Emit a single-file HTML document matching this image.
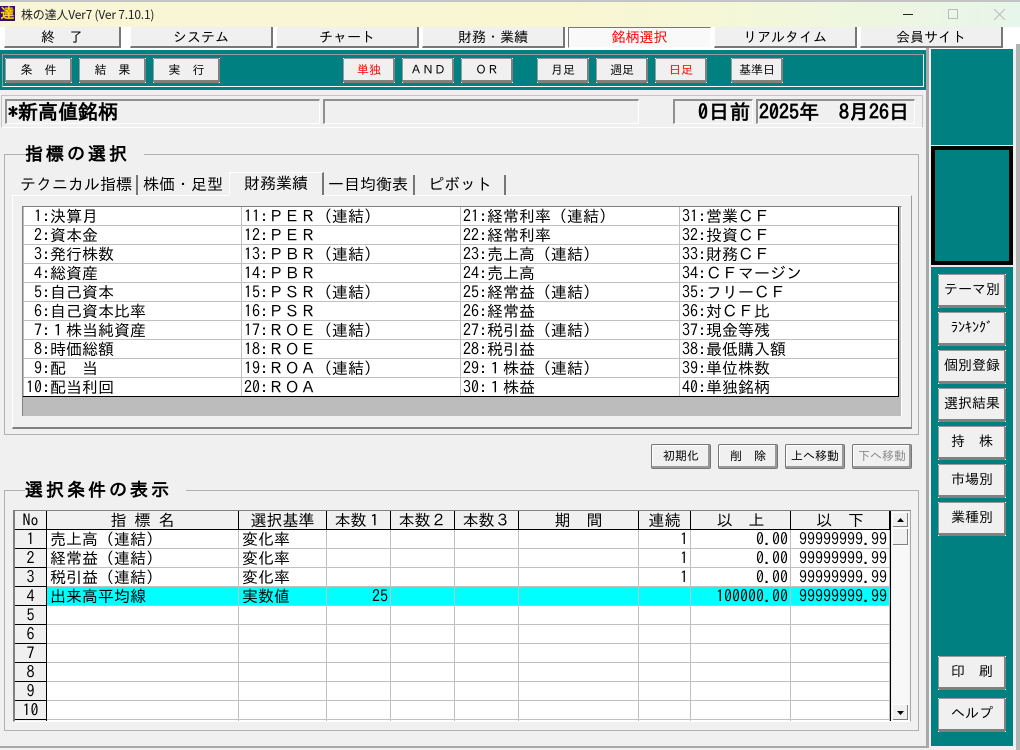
<!DOCTYPE html>
<html lang="ja"><head><meta charset="utf-8"><title>株の達人</title>
<style>
html,body{margin:0;padding:0}
body{width:1020px;height:750px;position:relative;overflow:hidden;background:#f0f0f0;font-family:"IPAGothic","Liberation Sans","Noto Sans CJK JP",sans-serif;color:#000}
.a{position:absolute;box-sizing:border-box}
.t{white-space:pre}
.tab{position:absolute;top:27px;height:21px;box-sizing:border-box;background:#f0f0f0;border-left:1px solid #fff;border-right:2px solid #777;border-bottom:2px solid #777;font-size:14px;line-height:20px;text-align:center;white-space:pre}
.tab.sel{background:#f9f9f9;border-left:1px solid #777;border-top:1px solid #777;border-right:1px solid #fff;border-bottom:1px solid #fff;color:#f00;line-height:19px}
.b{position:absolute;box-sizing:border-box;background:#f0f0f0;box-shadow:inset -2px -3px 0 #808080,inset 1px 1px 0 #999;text-align:center;white-space:pre;font-size:12px;color:#000}
.b::before{content:"";position:absolute;left:0;top:0;right:0;bottom:0;background:linear-gradient(#fff,#fff) 0 0/1px 1px no-repeat,linear-gradient(#fff,#fff) 100% 0/1px 1px no-repeat,linear-gradient(#fff,#fff) 0 100%/1px 1px no-repeat,linear-gradient(#fff,#fff) 100% 100%/1px 1px no-repeat}
.tb{top:58px;height:25px;line-height:24px}
.sb{left:938px;width:68px;height:34px;line-height:30px;font-size:14px}
.lb{top:444px;width:60px;height:25px;line-height:22px;border:1px solid #777;border-radius:2px;box-shadow:inset -2px -2px 0 #999,inset 1px 1px 0 #fff}
.lb::before{display:none}
.f{position:absolute;box-sizing:border-box;top:99px;height:25px;border-top:2px solid #909090;border-left:2px solid #909090;border-right:1px solid #fff;border-bottom:1px solid #fff;font-size:20px;line-height:23px;font-weight:bold;white-space:pre}
.g{position:absolute;box-sizing:border-box;left:4px;width:915px;border:1px solid #b0b0b0}
.leg{position:absolute;background:#f0f0f0;font-size:18px;font-weight:bold;letter-spacing:3px;line-height:20px;white-space:pre;padding-right:14px}
.tt{position:absolute;top:174px;font-size:16px;line-height:20px;white-space:pre}
.sep{position:absolute;top:175px;width:2px;height:20px;background:#777}
table{border-collapse:separate;border-spacing:0;table-layout:fixed;position:absolute}
td{box-sizing:border-box;height:19px;padding:0;white-space:pre;font-size:16px;line-height:18px;overflow:hidden;vertical-align:top}
.l td{border-right:1px solid #c0c0c0;border-bottom:1px solid #c0c0c0;padding-left:2px}
.l td:last-child{border-right:0}
.m td{border-right:1px solid #c0c0c0;border-bottom:1px solid #c0c0c0;padding:0 2px 0 3px}
.m td:first-child{background:#f0f0f0;border-right:1px solid #000;border-bottom:1px solid #000;text-align:center;padding:0}
.m tr.h td{background:#f0f0f0;border-right:1px solid #000;border-bottom:1px solid #000;text-align:center;padding:0}
.m tr.c td:not(:first-child){background:#0ff}
.m .n{text-align:right}
.arrow{position:absolute;box-sizing:border-box;left:892px;width:17px;background:#f0f0f0;border:1px solid #fff;box-shadow:inset -1px -1px 0 #808080}
</style></head>
<body>
<!-- title bar -->
<div class="a" style="left:0;top:0;width:1020px;height:27px;background:linear-gradient(90deg,#f8f6d6 0,#f9f6d2 55%,#f5f7d6 70%,#e7f6ea 100%);border-top:2px solid #c4c4c4"></div>
<div class="a" style="left:0;top:6px;width:15px;height:15px;background:#3a0a70;color:#ffd800;font-size:14px;font-weight:bold;line-height:15px;text-align:center;overflow:hidden">達</div>
<div class="a t" style="left:21px;top:7px;font:12px/15px 'Noto Sans CJK JP','Liberation Sans',sans-serif;color:#222;letter-spacing:-.2px">株の達人Ver7 (Ver 7.10.1)</div>
<div class="a" style="left:903px;top:14px;width:10px;height:1px;background:#222"></div>
<div class="a" style="left:948px;top:9px;width:10px;height:10px;border:1px solid #bbb"></div>
<svg class="a" style="left:994px;top:9px" width="11" height="11"><path d="M0 0L11 11M11 0L0 11" stroke="#bbb" fill="none"/></svg>

<!-- top tabs -->
<div class="a" style="left:0;top:27px;width:1020px;height:23px;background:#fff"></div>
<div class="tab" style="left:4px;width:117px">終　了</div>
<div class="tab" style="left:130px;width:143px">システム</div>
<div class="tab" style="left:276px;width:143px">チャート</div>
<div class="tab" style="left:422px;width:143px">財務・業績</div>
<div class="tab sel" style="left:568px;width:143px">銘柄選択</div>
<div class="tab" style="left:714px;width:143px">リアルタイム</div>
<div class="tab" style="left:860px;width:143px">会員サイト</div>

<!-- toolbar -->
<div class="a" style="left:0;top:50px;width:926px;height:40px;background:#008080"></div>
<div class="a" style="left:2px;top:54px;width:922px;height:33px;border:1px solid #9a9a9a;border-right-color:#fff;border-bottom-color:#fff"></div>
<div class="b tb" style="left:5px;width:67px">条　件</div>
<div class="b tb" style="left:79px;width:67px">結　果</div>
<div class="b tb" style="left:153px;width:67px">実　行</div>
<div class="b tb" style="left:343px;width:52px;color:#f00">単独</div>
<div class="b tb" style="left:402px;width:52px">ＡＮＤ</div>
<div class="b tb" style="left:461px;width:52px">ＯＲ</div>
<div class="b tb" style="left:537px;width:52px">月足</div>
<div class="b tb" style="left:596px;width:52px">週足</div>
<div class="b tb" style="left:655px;width:52px;color:#f00">日足</div>
<div class="b tb" style="left:731px;width:52px">基準日</div>

<!-- info row -->
<div class="a" style="left:1px;top:95px;width:922px;height:33px;border:1px solid #c4c4c4;border-bottom-color:#fff;border-right-color:#c4c4c4"></div>
<div class="f" style="left:5px;width:315px;padding-left:1px">*新高値銘柄</div>
<div class="f" style="left:323px;width:316px"></div>
<div class="f" style="left:673px;width:80px;text-align:right;padding-right:1px;letter-spacing:1px">0日前</div>
<div class="f" style="left:756px;width:159px;padding-left:1px">2025年  8月26日</div>

<!-- group 1 -->
<div class="g" style="top:154px;height:281px"></div>
<div class="leg" style="left:25px;top:144px">指標の選択</div>
<div class="tt" style="left:20px">テクニカル指標</div><div class="sep" style="left:136px"></div>
<div class="tt" style="left:143px">株価・足型</div>
<div class="a" style="left:229px;top:172px;width:95px;height:24px;background:#f0f0f0;border-top:1px solid #fff;border-left:1px solid #fff;border-right:2px solid #777"></div>
<div class="tt" style="left:244px;top:173px">財務業績</div>
<div class="tt" style="left:328px">一目均衡表</div><div class="sep" style="left:413px"></div>
<div class="tt" style="left:428px">ピボット</div><div class="sep" style="left:504px"></div>
<div class="a" style="left:12px;top:195px;width:900px;height:234px;border:1px solid #fff;border-right-color:#9a9a9a;border-bottom:2px solid #808080"></div>
<div class="a" style="left:229px;top:195px;width:93px;height:1px;background:#f0f0f0"></div>
<div class="a" style="left:22px;top:206px;width:880px;height:210px;background:#bcbcbc;border-top:1px solid #808080;border-left:1px solid #808080;border-right:1px solid #fff"></div>
<div class="a" style="left:24px;top:207px;width:875px;height:190px;background:#fff;border-right:1px solid #000"></div>
<table class="l" style="left:24px;top:207px;width:874px">
<colgroup><col style="width:218px"><col style="width:219px"><col style="width:219px"><col style="width:218px"></colgroup>
<tr><td> 1:決算月</td><td>11:ＰＥＲ（連結）</td><td>21:経常利率（連結）</td><td>31:営業ＣＦ</td></tr>
<tr><td> 2:資本金</td><td>12:ＰＥＲ</td><td>22:経常利率</td><td>32:投資ＣＦ</td></tr>
<tr><td> 3:発行株数</td><td>13:ＰＢＲ（連結）</td><td>23:売上高（連結）</td><td>33:財務ＣＦ</td></tr>
<tr><td> 4:総資産</td><td>14:ＰＢＲ</td><td>24:売上高</td><td>34:ＣＦマージン</td></tr>
<tr><td> 5:自己資本</td><td>15:ＰＳＲ（連結）</td><td>25:経常益（連結）</td><td>35:フリーＣＦ</td></tr>
<tr><td> 6:自己資本比率</td><td>16:ＰＳＲ</td><td>26:経常益</td><td>36:対ＣＦ比</td></tr>
<tr><td> 7:１株当純資産</td><td>17:ＲＯＥ（連結）</td><td>27:税引益（連結）</td><td>37:現金等残</td></tr>
<tr><td> 8:時価総額</td><td>18:ＲＯＥ</td><td>28:税引益</td><td>38:最低購入額</td></tr>
<tr><td> 9:配　当</td><td>19:ＲＯＡ（連結）</td><td>29:１株益（連結）</td><td>39:単位株数</td></tr>
<tr><td>10:配当利回</td><td>20:ＲＯＡ</td><td>30:１株益</td><td>40:単独銘柄</td></tr>
</table>
<div class="a" style="left:23px;top:396px;width:876px;height:1px;background:#000"></div>

<!-- buttons -->
<div class="b lb" style="left:651px">初期化</div>
<div class="b lb" style="left:718px">削　除</div>
<div class="b lb" style="left:785px">上へ移動</div>
<div class="b lb" style="left:852px;color:#8a8a8a">下へ移動</div>

<!-- group 2 -->
<div class="g" style="top:490px;height:241px"></div>
<div class="leg" style="left:25px;top:480px">選択条件の表示</div>
<div class="a" style="left:13px;top:510px;width:898px;height:212px;background:#f0f0f0;border-top:1px solid #808080;border-left:2px solid #808080;border-right:1px solid #a8a8a8;border-bottom:1px solid #fff"></div>
<div class="a" style="left:15px;top:511px;width:876px;height:210px;background:#fff;overflow:hidden;border-right:1px solid #000">
<table class="m" style="left:0;top:0;width:875px">
<colgroup><col style="width:32px"><col style="width:192px"><col style="width:88px"><col style="width:64px"><col style="width:64px"><col style="width:64px"><col style="width:120px"><col style="width:52px"><col style="width:100px"><col style="width:99px"></colgroup>
<tr class="h" style="height:19px"><td>No</td><td>指 標 名</td><td>選択基準</td><td>本数１</td><td>本数２</td><td>本数３</td><td>期　間</td><td>連続</td><td>以　上</td><td>以　下</td></tr>
<tr><td>1</td><td>売上高（連結）</td><td>変化率</td><td></td><td></td><td></td><td></td><td class="n">1</td><td class="n">0.00</td><td class="n">99999999.99</td></tr>
<tr><td>2</td><td>経常益（連結）</td><td>変化率</td><td></td><td></td><td></td><td></td><td class="n">1</td><td class="n">0.00</td><td class="n">99999999.99</td></tr>
<tr><td>3</td><td>税引益（連結）</td><td>変化率</td><td></td><td></td><td></td><td></td><td class="n">1</td><td class="n">0.00</td><td class="n">99999999.99</td></tr>
<tr class="c"><td>4</td><td>出来高平均線</td><td>実数値</td><td class="n">25</td><td></td><td></td><td></td><td></td><td class="n">100000.00</td><td class="n">99999999.99</td></tr>
<tr><td>5</td><td></td><td></td><td></td><td></td><td></td><td></td><td></td><td></td><td></td></tr>
<tr><td>6</td><td></td><td></td><td></td><td></td><td></td><td></td><td></td><td></td><td></td></tr>
<tr><td>7</td><td></td><td></td><td></td><td></td><td></td><td></td><td></td><td></td><td></td></tr>
<tr><td>8</td><td></td><td></td><td></td><td></td><td></td><td></td><td></td><td></td><td></td></tr>
<tr><td>9</td><td></td><td></td><td></td><td></td><td></td><td></td><td></td><td></td><td></td></tr>
<tr><td>10</td><td></td><td></td><td></td><td></td><td></td><td></td><td></td><td></td><td></td></tr>
<tr><td></td><td></td><td></td><td></td><td></td><td></td><td></td><td></td><td></td><td></td></tr>
</table>
</div>
<!-- scrollbar -->
<div class="a" style="left:892px;top:512px;width:17px;height:209px;background:#f8f8f8"></div>
<div class="arrow" style="top:512px;height:16px"><svg width="15" height="14" style="display:block"><path d="M4 9h7L7.5 5z" fill="#000"/></svg></div>
<div class="arrow" style="top:528px;height:18px"></div>
<div class="arrow" style="top:704px;height:17px"><svg width="15" height="15" style="display:block"><path d="M4 6h7L7.5 10z" fill="#000"/></svg></div>

<!-- right sidebar -->
<div class="a" style="left:926px;top:48px;width:3px;height:699px;background:#a8a8a8"></div>
<div class="a" style="left:929px;top:48px;width:2px;height:699px;background:#f4f4f4"></div>
<div class="a" style="left:931px;top:49px;width:82px;height:697px;background:#008080"></div>
<div class="a" style="left:930px;top:145px;width:83px;height:1px;background:#e8e8e8"></div>
<div class="a" style="left:931px;top:146px;width:82px;height:119px;background:#008080;border:4px solid #000"></div>
<div class="a" style="left:930px;top:265px;width:83px;height:2px;background:#e8e8e8"></div>
<div class="a" style="left:1016px;top:44px;width:4px;height:706px;background:#b4b4b4"></div>
<div class="b sb" style="top:274px">テーマ別</div>
<div class="b sb" style="top:312px">ﾗﾝｷﾝｸﾞ</div>
<div class="b sb" style="top:350px">個別登録</div>
<div class="b sb" style="top:388px">選択結果</div>
<div class="b sb" style="top:426px">持　株</div>
<div class="b sb" style="top:464px">市場別</div>
<div class="b sb" style="top:502px">業種別</div>
<div class="b sb" style="top:656px">印　刷</div>
<div class="b sb" style="top:698px">ヘルプ</div>

<!-- bottom -->
<div class="a" style="left:0;top:746px;width:929px;height:2px;background:#a8a8a8"></div>
</body></html>
